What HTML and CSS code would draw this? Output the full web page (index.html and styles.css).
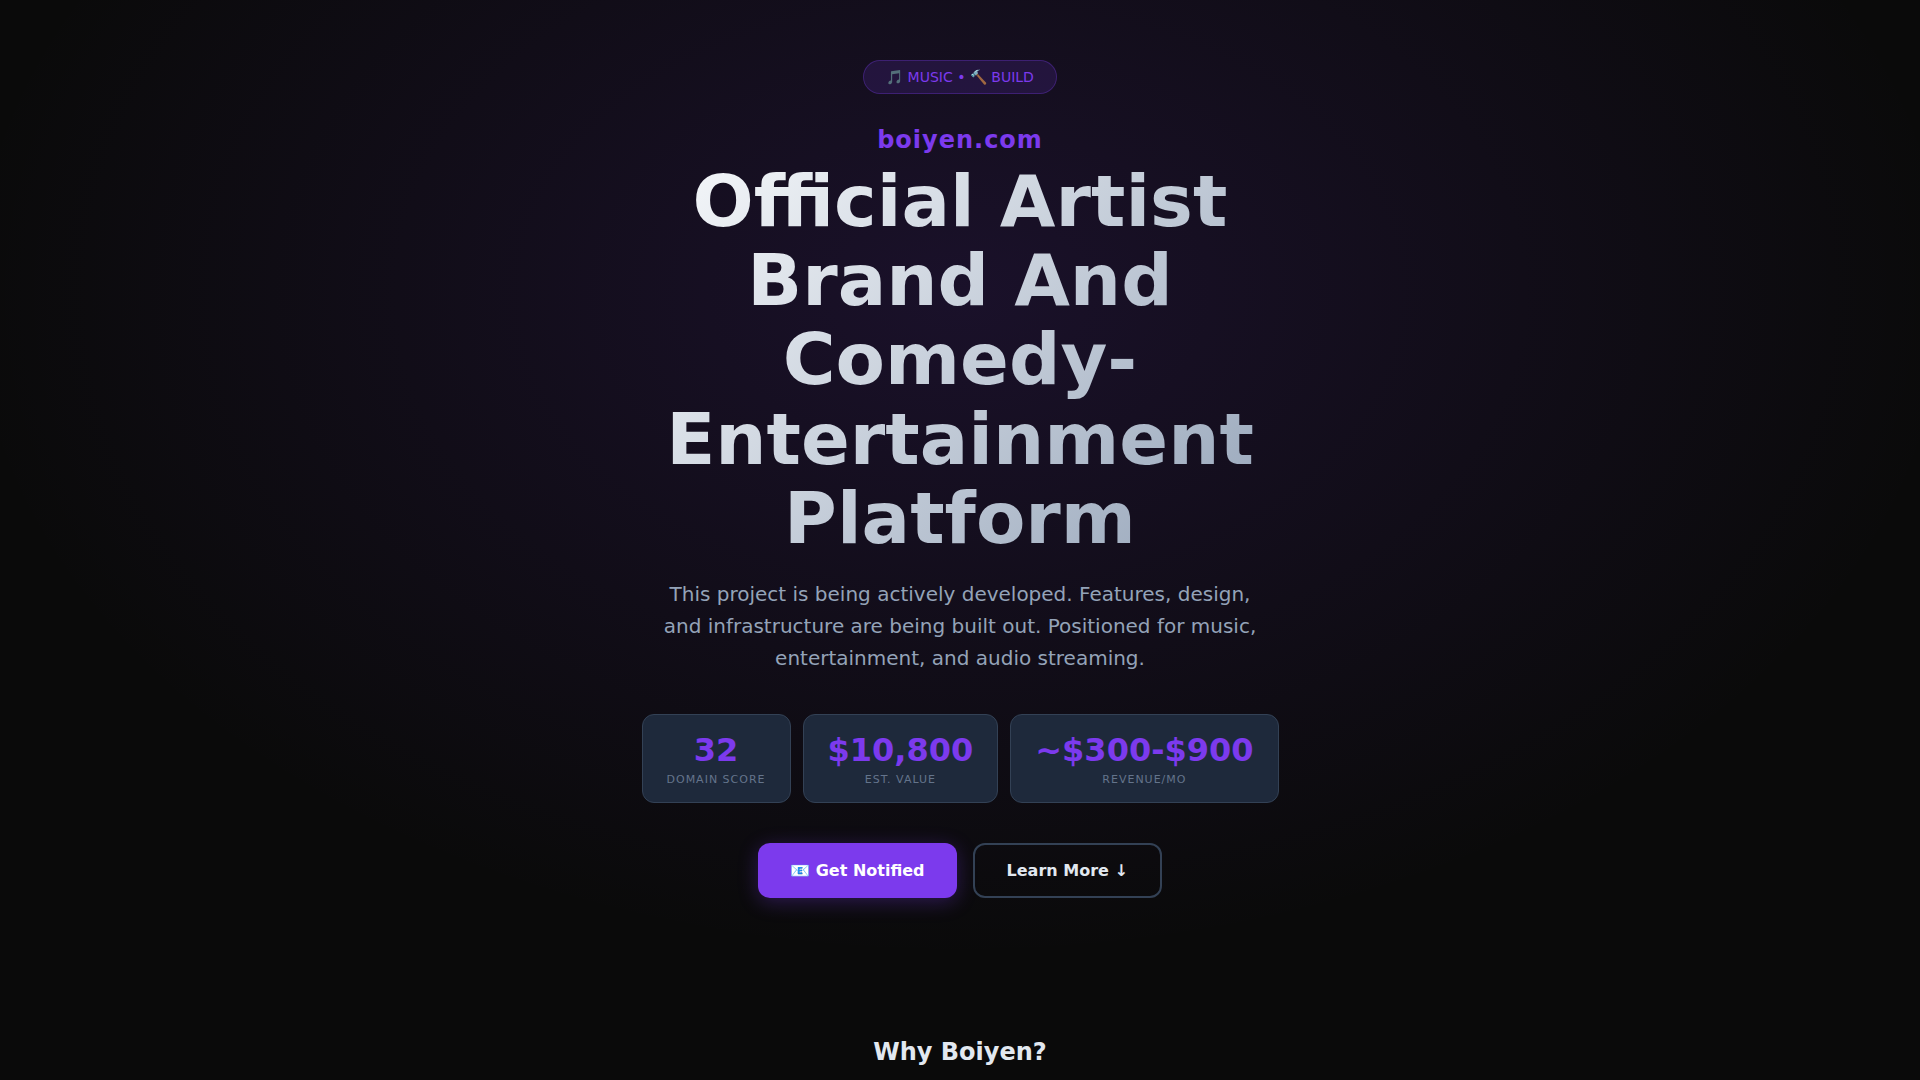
FILE: index.html
```html
<!DOCTYPE html>
<html lang="en">
<head>
<meta charset="utf-8">
<meta name="viewport" content="width=device-width, initial-scale=1">
<title>boiyen.com</title>
<link rel="stylesheet" href="styles.css">
</head>
<body>
<header class="hero">
  <div class="hero-content">
    <span class="badge">🎵 MUSIC • 🔨 BUILD</span>
    <div class="domain">boiyen.com</div>
    <h1 class="title">Official Artist Brand And Comedy-Entertainment Platform</h1>
    <p class="lead">This project is being actively developed. Features, design, and infrastructure are being built out. Positioned for music, entertainment, and audio streaming.</p>
    <div class="stats">
      <div class="stat"><div class="stat-value">32</div><div class="stat-label">Domain Score</div></div>
      <div class="stat"><div class="stat-value">$10,800</div><div class="stat-label">Est. Value</div></div>
      <div class="stat"><div class="stat-value">~$300-$900</div><div class="stat-label">Revenue/mo</div></div>
    </div>
    <div class="actions">
      <a class="btn btn-primary" href="#notify">📧 Get Notified</a>
      <a class="btn btn-outline" href="#why">Learn More ↓</a>
    </div>
  </div>
</header>
<section class="why" id="why">
  <h2 class="why-title">Why Boiyen?</h2>
</section>
</body>
</html>
```
FILE: styles.css
```css
* { box-sizing: border-box; margin: 0; padding: 0; }
body {
  background: #0a0a0a;
  color: #e2e8f0;
  font-family: "DejaVu Sans", sans-serif;
  line-height: 1.6;
  overflow-x: hidden;
}
.hero {
  display: flex;
  justify-content: center;
  padding: 60px 20px 80px;
  text-align: center;
  background:
    radial-gradient(ellipse 52% 68% at 50% 30%, rgba(124, 58, 237, 0.14), transparent);
}
.hero-content {
  display: flex;
  flex-direction: column;
  align-items: center;
  max-width: 640px;
}
.badge {
  padding: 6px 22px;
  margin-bottom: 27px;
  border: 1px solid rgba(124, 58, 237, 0.3);
  border-radius: 20px;
  background: rgba(124, 58, 237, 0.15);
  color: #7c3aed;
  font-size: 14px;
  line-height: 20px;
}
.domain {
  margin-bottom: 3px;
  color: #7c3aed;
  font-size: 24px;
  font-weight: 700;
  letter-spacing: 1px;
  line-height: 38px;
}
.title {
  margin-bottom: 20px;
  background: linear-gradient(135deg, #f8fafc, #94a3b8);
  background-clip: text;
  -webkit-background-clip: text;
  color: transparent;
  font-size: 72px;
  line-height: 1.1;
}
.lead {
  max-width: 600px;
  margin-bottom: 40px;
  color: #94a3b8;
  font-size: 20px;
}
.stats { display: flex; justify-content: center; gap: 12px; margin-bottom: 40px; }
.stat {
  padding: 16px 24px;
  border: 1px solid #334155;
  border-radius: 12px;
  background: #1e293b;
}
.stat-value { color: #7c3aed; font-size: 32px; font-weight: 700; line-height: 38px; }
.stat-label {
  margin-top: 4px;
  color: #64748b;
  font-size: 11px;
  letter-spacing: 1px;
  line-height: 13px;
  text-transform: uppercase;
}
.actions { display: flex; justify-content: center; gap: 16px; }
.btn {
  padding: 18px 32px;
  border-radius: 12px;
  font-size: 16px;
  font-weight: 600;
  line-height: 19px;
  text-decoration: none;
}
.btn-primary { background: #7c3aed; color: #fff; box-shadow: 0 4px 20px rgba(124, 58, 237, 0.3); }
.btn-outline { padding: 16px 32px; border: 2px solid #334155; color: #e2e8f0; }
.why { padding: 60px 20px; text-align: center; }
.why-title { font-size: 24px; line-height: 28px; }
```
